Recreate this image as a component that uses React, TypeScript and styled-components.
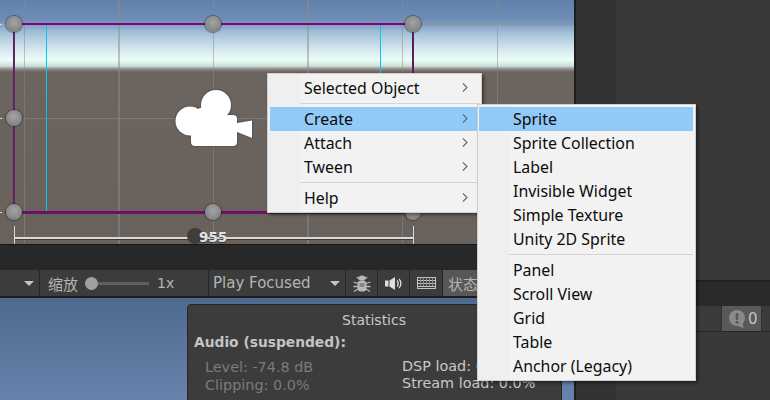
import React from "react";
import styled, { createGlobalStyle } from "styled-components";

const Global = createGlobalStyle`
  html, body { margin: 0; padding: 0; background: #3a3a3a; }
  #root { width: 770px; height: 400px; overflow: hidden; }
`;

const Page = styled.div`
  position: relative;
  width: 770px;
  height: 400px;
  display: grid;
  grid-template-columns: 574px 2px 40px 1fr;
  overflow: hidden;
  font-family: "DejaVu Sans", sans-serif;
`;
const LeftColumn = styled.div`
  display: flex;
  flex-direction: column;
  min-width: 0;
`;
const Divider = styled.div`background: #1e1e1e;`;
const SideStrip = styled.div`background: #323232;`;
const RightColumn = styled.div`
  display: flex;
  flex-direction: column;
  background: #393939;
`;
const RightSpacer = styled.div`flex: 0 0 280px;`;
const RightTab = styled.div`
  flex: 0 0 26px;
  background: #2a2a2a;
  border-top: 2px solid #212121;
  box-sizing: border-box;
`;
const RightBar = styled.div`
  flex: 0 0 26px;
  box-sizing: border-box;
  background: #3b3b3b;
  border-bottom: 1px solid #252525;
  display: flex;
  justify-content: flex-end;
  padding-right: 8px;
`;
const ConsoleBadge = styled.div`
  width: 41px;
  background: #595959;
  border-left: 1px solid #303030;
  border-right: 1px solid #303030;
  box-sizing: border-box;
  display: flex;
  align-items: center;
  gap: 2px;
  padding-left: 7px;
  color: #c4c4c4;
  font-size: 15px;
`;

const Scene = styled.div`
  position: relative;
  flex: 0 0 244px;
  overflow: hidden;
  background: linear-gradient(
    180deg,
    #6181ab 0px,
    #6f8eb6 20px,
    #a5c0d9 33px,
    #d5eaee 50px,
    #ebfdf8 60px,
    #cfdfdb 66px,
    #8f8d87 69px,
    #6c645e 72px,
    #69625c 100%
  );
`;
const GridV = styled.i<{ $x: number; $w?: number }>`
  position: absolute;
  left: ${(p) => p.$x}px;
  top: 0;
  width: ${(p) => p.$w ?? 1}px;
  height: 100%;
  background: rgba(140, 140, 140, 0.5);
`;
const GridH = styled.i<{ $y: number; $x: number; $w: number; $h?: number }>`
  position: absolute;
  left: ${(p) => p.$x}px;
  top: ${(p) => p.$y}px;
  width: ${(p) => p.$w}px;
  height: ${(p) => p.$h ?? 1}px;
  background: rgba(140, 140, 140, 0.5);
`;
const EdgeMark = styled.i<{ $y: number }>`
  position: absolute;
  left: 0;
  top: ${(p) => p.$y}px;
  width: 2px;
  height: 1px;
  background: #d8d8d8;
`;
const PurpleFrame = styled.div`
  position: absolute;
  left: 13px;
  top: 23px;
  width: 400px;
  height: 190px;
  box-sizing: border-box;
  border-style: solid;
  border-color: #80007f;
  border-width: 2px 1px 2px 1px;
  box-shadow: 0 1px 0 #3b3538, inset 1px 0 0 #45414a, 1px 0 0 #3b3538;
`;
const CyanLine = styled.i<{ $x: number }>`
  position: absolute;
  left: ${(p) => p.$x}px;
  top: 25px;
  width: 1px;
  height: 186px;
  background: #00c8f0;
`;
const Handle = styled.i<{ $x: number; $y: number }>`
  position: absolute;
  left: ${(p) => p.$x - 8}px;
  top: ${(p) => p.$y - 8}px;
  width: 16px;
  height: 16px;
  border-radius: 50%;
  background: radial-gradient(circle at 50% 40%, #a4a4a4, #828282 75%, #6c6c6c);
  box-shadow: 0 0 1px 1px rgba(40, 40, 40, 0.55);
`;
const CameraIcon = styled.svg`
  position: absolute;
  left: 170px;
  top: 85px;
  filter: drop-shadow(0 0 1px rgba(40, 35, 30, 0.6));
`;
const MeasureTick = styled.i<{ $x: number }>`
  position: absolute;
  left: ${(p) => p.$x}px;
  top: 226px;
  width: 1px;
  height: 18px;
  background: #d8d8d8;
`;
const MeasureLine = styled.i`
  position: absolute;
  left: 15px;
  top: 237px;
  width: 398px;
  height: 2px;
  background: #d9d9d9;
  box-shadow: 0 1px 0 #3e3a37;
`;
const MeasureDot = styled.i`
  position: absolute;
  left: 187px;
  top: 228px;
  width: 16px;
  height: 16px;
  border-radius: 50%;
  background: #403c39;
`;
const MeasureLabel = styled.span`
  position: absolute;
  left: 199px;
  top: 229px;
  color: #e2e2e2;
  font-size: 13.5px;
  font-weight: 700;
  line-height: 17px;
  text-shadow: 0 1px 1px #3a3a3a;
`;

const TabStrip = styled.div`
  flex: 0 0 26px;
  box-sizing: border-box;
  background: #282828;
  border-top: 1px solid #181818;
`;
const Toolbar = styled.div`
  flex: 0 0 26px;
  display: flex;
  background: #3c3c3c;
  box-sizing: border-box;
  color: #b4b4b4;
  font-size: 15px;
`;
const ToolCell = styled.div<{ $w: number; $active?: boolean }>`
  flex: 0 0 ${(p) => p.$w}px;
  box-sizing: border-box;
  border-right: 1px solid #272727;
  display: flex;
  align-items: center;
  overflow: hidden;
  white-space: nowrap;
  background: ${(p) => (p.$active ? "#575757" : "transparent")};
`;
const ArrowDown = styled.i`
  width: 0;
  height: 0;
  border-left: 5px solid transparent;
  border-right: 5px solid transparent;
  border-top: 5px solid #c4c4c4;
`;
const FirstCell = styled(ToolCell)`
  justify-content: flex-end;
  padding-right: 5px;
`;
const ZoomCell = styled(ToolCell)`padding-left: 8px;`;
const ZoomLabel = styled.span`
  font-family: "Noto Sans CJK SC", sans-serif;
  font-size: 15px;
  width: 37px;
`;
const SliderTrack = styled.div`
  position: relative;
  width: 64px;
  height: 3px;
  background: #5f5f5f;
  margin-right: 8px;
`;
const SliderThumb = styled.i`
  position: absolute;
  left: 0;
  top: -5px;
  width: 13px;
  height: 13px;
  border-radius: 50%;
  background: #a0a0a0;
`;
const ScaleValue = styled.span`font-size: 14px;`;
const PlayCell = styled(ToolCell)`
  padding: 0 5px 0 4px;
  justify-content: space-between;
`;
const IconCell = styled(ToolCell)`justify-content: center;`;
const StatsCell = styled(ToolCell)`
  padding-left: 5px;
  border-right: none;
  font-family: "Noto Sans CJK SC", sans-serif;
  font-size: 15px;
`;

const GameView = styled.div`
  flex: 1;
  background: linear-gradient(180deg, #4f6a90, #6d86b0);
  border-top: 2px solid #1e1e1e;
  box-sizing: border-box;
  padding: 6px 12px 0 187px;
`;
const StatsPanel = styled.div`
  height: 110px;
  box-sizing: border-box;
  background: #3c3c3c;
  border: 1px solid #262626;
  border-radius: 4px;
  padding: 7px 6px;
  font-size: 14px;
  color: #c8c8c8;
  overflow: hidden;
`;
const StatsTitle = styled.div`
  text-align: center;
  line-height: 17px;
  padding-right: 1px;
`;
const StatsHeading = styled.div`
  font-weight: 700;
  font-size: 13.8px;
  margin-top: 5px;
  line-height: 17px;
  color: #c4c4c4;
`;
const StatsGrid = styled.div`
  display: grid;
  grid-template-columns: 197px 1fr;
  padding-left: 11px;
  margin-top: 7px;
  white-space: nowrap;
  font-size: 14.4px;
`;
const DimColumn = styled.div`
  line-height: 18px;
  color: #7b7b7b;
`;
const LoadColumn = styled.div`
  line-height: 17px;
  color: #c8c8c8;
`;

const Menu = styled.div<{ $x: number; $y: number; $w: number; $pl: number }>`
  position: absolute;
  left: ${(p) => p.$x}px;
  top: ${(p) => p.$y}px;
  width: ${(p) => p.$w}px;
  box-sizing: border-box;
  background: linear-gradient(90deg, #efefef 32px, #f2f2f2 32px);
  border: 1px solid #cfcfcf;
  padding: 2px 2px 2px ${(p) => p.$pl}px;
  box-shadow: 2px 2px 3px rgba(0, 0, 0, 0.45);
  font-family: "Noto Sans", sans-serif;
  font-size: 15.9px;
  color: #0c0c0c;
`;
const MenuItem = styled.div<{ $active?: boolean }>`
  height: 24px;
  line-height: 24px;
  padding-left: 34px;
  position: relative;
  background: ${(p) => (p.$active ? "#91c9f7" : "transparent")};
`;
const MenuSeparator = styled.div`
  height: 1px;
  margin: 3px 0 3px 30px;
  background: #d4d4d4;
`;
const Chevron = styled.svg`
  position: absolute;
  right: 11px;
  top: 7px;
`;

const Arrow = () => (
  <Chevron width="6" height="9" viewBox="0 0 6 9">
    <path d="M1 .5 5 4.5 1 8.5" fill="none" stroke="#666" strokeWidth="1.1" />
  </Chevron>
);

const Bug = () => (
  <svg width="18" height="19" viewBox="0 0 18 19" fill="#b9b9b9">
    <ellipse cx="9" cy="4" rx="3.5" ry="2.6" />
    <rect x="4.5" y="6.5" width="9" height="11" rx="3.5" />
    <rect x="6.5" y="9" width="5" height="4" fill="#3c3c3c" opacity=".4" />
    <path d="M4 3 6 5M14 3 12 5M.5 8 5 9.5M17.5 8 13 9.5M.5 12.5H5M17.5 12.5H13M1 17.5 5 15M17 17.5 13 15" stroke="#b9b9b9" strokeWidth="1.3" fill="none" />
  </svg>
);
const Speaker = () => (
  <svg width="19" height="15" viewBox="0 0 19 15">
    <path d="M1 4.5H4.5V10.5H1Z" fill="#dedede" />
    <path d="M5.5 4.5 11 1V14L5.5 10.5Z" fill="#dedede" />
    <path d="M13 4.5C14.5 6 14.5 9 13 10.5M15 3C17.5 5.500 17.5 9.500 15 12" fill="none" stroke="#dedede" strokeWidth="1.3" />
  </svg>
);
const Keyboard = () => (
  <svg width="19" height="12" viewBox="0 0 19 12" fill="none" stroke="#c4c4c4" strokeWidth="1">
    <rect x=".5" y=".5" width="18" height="11" />
    <path d="M.5 3.500H18.500M.5 6.500H18.500M.5 9.500H18.500" />
    <path d="M3.500 .5V9M6.500 .5V9M9.500 .5V9M12.500 .5V9M15.500 .5V9" stroke="#8a8a8a" />
  </svg>
);
const Bubble = () => (
  <svg width="17" height="18" viewBox="0 0 17 18">
    <path d="M9 15.500c1.500 1.200 3.500 2 6 2.300-.8-1-1.200-2.400-.9-4Z" fill="#8a8a8a" />
    <circle cx="8" cy="8" r="8" fill="#8a8a8a" />
    <rect x="6.700" y="3" width="2.600" height="7" rx="1" fill="#595959" />
    <circle cx="8" cy="12.300" r="1.500" fill="#595959" />
  </svg>
);

export default function App() {
  return (
    <Page>
      <Global />
      <LeftColumn>
        <Scene>
          {[
            [24, 1],
            [118, 2],
            [213, 1],
            [307, 2],
            [402, 1],
            [497, 1],
          ].map(([x, w]) => (
            <GridV key={x} $x={x} $w={w} />
          ))}
          <GridH $y={23} $x={414} $w={160} $h={2} />
          <GridH $y={118} $x={0} $w={574} />
          <EdgeMark $y={24} />
          <EdgeMark $y={118} />
          <EdgeMark $y={212} />
          <PurpleFrame />
          <CyanLine $x={46} />
          <CyanLine $x={380} />
          {[
            [14, 24],
            [213, 24],
            [413, 24],
            [14, 118],
            [413, 118],
            [14, 212],
            [213, 212],
            [413, 212],
          ].map(([x, y]) => (
            <Handle key={`${x}-${y}`} $x={x} $y={y} />
          ))}
          <CameraIcon width="86" height="66" viewBox="0 0 86 66" fill="#fff">
            <circle cx="46" cy="20" r="15" />
            <circle cx="20" cy="36" r="14.500" />
            <path d="M28 24 40 18V40H28Z" />
            <rect x="21" y="30" width="46" height="31" rx="4" />
            <path d="M67 38 82 35.500V53L67 47Z" />
          </CameraIcon>
          <MeasureTick $x={14} />
          <MeasureTick $x={413} />
          <MeasureLine />
          <MeasureDot />
          <MeasureLabel>955</MeasureLabel>
        </Scene>
        <TabStrip />
        <Toolbar>
          <FirstCell $w={40}>
            <ArrowDown />
          </FirstCell>
          <ZoomCell $w={169}>
            <ZoomLabel>缩放</ZoomLabel>
            <SliderTrack>
              <SliderThumb />
            </SliderTrack>
            <ScaleValue>1x</ScaleValue>
          </ZoomCell>
          <PlayCell $w={137}>
            Play Focused
            <ArrowDown />
          </PlayCell>
          <IconCell $w={32}>
            <Bug />
          </IconCell>
          <IconCell $w={32}>
            <Speaker />
          </IconCell>
          <IconCell $w={33}>
            <Keyboard />
          </IconCell>
          <StatsCell $w={60} $active>
            状态
          </StatsCell>
        </Toolbar>
        <GameView>
          <StatsPanel>
            <StatsTitle>Statistics</StatsTitle>
            <StatsHeading>Audio (suspended):</StatsHeading>
            <StatsGrid>
              <DimColumn>
                Level: -74.8 dB
                <br />
                Clipping: 0.0%
              </DimColumn>
              <LoadColumn>
                DSP load: 0.0%
                <br />
                Stream load: 0.0%
              </LoadColumn>
            </StatsGrid>
          </StatsPanel>
        </GameView>
      </LeftColumn>
      <Divider />
      <SideStrip />
      <RightColumn>
        <RightSpacer />
        <RightTab />
        <RightBar>
          <ConsoleBadge>
            <Bubble />0
          </ConsoleBadge>
        </RightBar>
      </RightColumn>

      <Menu $x={267} $y={73} $w={215} $pl={2}>
        <MenuItem>
          Selected Object
          <Arrow />
        </MenuItem>
        <MenuSeparator />
        <MenuItem $active>
          Create
          <Arrow />
        </MenuItem>
        <MenuItem>
          Attach
          <Arrow />
        </MenuItem>
        <MenuItem>
          Tween
          <Arrow />
        </MenuItem>
        <MenuSeparator />
        <MenuItem>
          Help
          <Arrow />
        </MenuItem>
      </Menu>
      <Menu $x={477} $y={104} $w={219} $pl={1}>
        <MenuItem $active>Sprite</MenuItem>
        <MenuItem>Sprite Collection</MenuItem>
        <MenuItem>Label</MenuItem>
        <MenuItem>Invisible Widget</MenuItem>
        <MenuItem>Simple Texture</MenuItem>
        <MenuItem>Unity 2D Sprite</MenuItem>
        <MenuSeparator />
        <MenuItem>Panel</MenuItem>
        <MenuItem>Scroll View</MenuItem>
        <MenuItem>Grid</MenuItem>
        <MenuItem>Table</MenuItem>
        <MenuItem>Anchor (Legacy)</MenuItem>
      </Menu>
    </Page>
  );
}
